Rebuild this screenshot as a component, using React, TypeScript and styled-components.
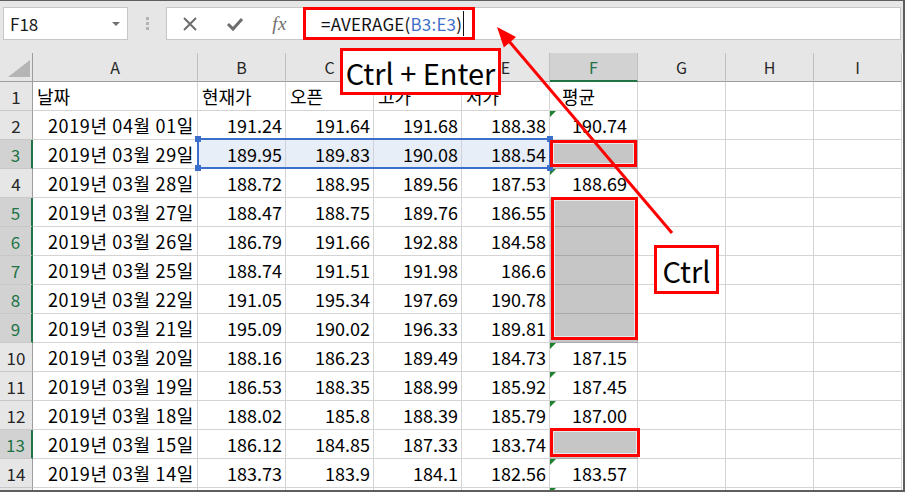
import React from 'react';
import styled, { createGlobalStyle } from 'styled-components';

const FONT = `"Noto Sans CJK KR", "Noto Sans", sans-serif`;

const GlobalStyle = createGlobalStyle`
  html, body { margin: 0; padding: 0; background: #ffffff; }
  body { font-family: ${FONT}; }
`;

const Page = styled.div`
  width: 905px;
  height: 492px;
  box-sizing: border-box;
  padding: 1px 2px 2px 0;
  background: #5e5e5e;
`;

const Frame = styled.div`
  position: relative;
  width: 903px;
  height: 489px;
  overflow: hidden;
  background: #e6e6e6;
  font-family: ${FONT};
`;

const TopBar = styled.div`
  height: 52px;
  box-sizing: border-box;
  display: flex;
  align-items: flex-start;
  padding: 6px 2px 0 3px;
`;

const NameBox = styled.div`
  width: 125px;
  height: 33px;
  box-sizing: border-box;
  background: #ffffff;
  border: 1px solid #c6c6c6;
  display: flex;
  align-items: center;
  justify-content: space-between;
  padding: 0 7px 0 6px;
  font-size: 17px;
  color: #1a1a1a;
`;

const DropArrow = styled.span`
  width: 0;
  height: 0;
  border-left: 4px solid transparent;
  border-right: 4px solid transparent;
  border-top: 4px solid #707070;
`;

const Grip = styled.div`
  display: flex;
  flex-direction: column;
  gap: 2px;
  margin: 10px 17px 0 18px;
`;

const GripDot = styled.span`
  width: 3px;
  height: 3px;
  background: #b3b3b3;
`;

const FormulaBox = styled.div`
  flex: 1;
  height: 33px;
  box-sizing: border-box;
  background: #ffffff;
  border: 1px solid #c6c6c6;
  display: flex;
  align-items: center;
`;

const ToolSlot = styled.span`
  width: 45px;
  height: 100%;
  display: flex;
  align-items: center;
  justify-content: center;
  color: #6e6e6e;
`;

const FxText = styled.span`
  font-family: "Liberation Serif", "DejaVu Serif", serif;
  font-style: italic;
  font-size: 19px;
  color: #6e6e6e;
  letter-spacing: 0.5px;
`;

const FormulaText = styled.div`
  margin-left: 19px;
  font-size: 17px;
  color: #111111;
  display: flex;
  align-items: center;
  white-space: pre;
  letter-spacing: 0.2px;
`;

const Ref = styled.span`
  color: #3f6fc9;
`;

const Caret = styled.span`
  width: 1px;
  height: 25px;
  background: #111111;
  margin-left: 1px;
`;

const Sheet = styled.div`
  position: relative;
  display: grid;
  grid-template-columns: 33px 165px repeat(8, 88px);
  grid-auto-rows: 29px;
  background: #ffffff;
`;

const Corner = styled.div`
  box-sizing: border-box;
  background: #e6e6e6;
  border-right: 1px solid #9e9e9e;
  border-bottom: 1px solid #9e9e9e;
  display: flex;
  align-items: flex-end;
  justify-content: flex-end;
  padding: 0 2px 4px 0;
  &::after {
    content: '';
    width: 0;
    height: 0;
    border-left: 22px solid transparent;
    border-bottom: 17px solid #b5b5b5;
  }
`;

const ColHead = styled.div<{ $active?: boolean }>`
  box-sizing: border-box;
  display: flex;
  align-items: center;
  justify-content: center;
  background: ${(p) => (p.$active ? '#d2d2d2' : '#e6e6e6')};
  color: ${(p) => (p.$active ? '#217346' : '#262626')};
  border-right: 1px solid #c0c0c0;
  border-bottom: ${(p) => (p.$active ? '2px solid #217346' : '1px solid #9e9e9e')};
  font-size: 16px;
`;

const RowHead = styled.div<{ $active?: boolean }>`
  box-sizing: border-box;
  display: flex;
  align-items: center;
  justify-content: center;
  background: ${(p) => (p.$active ? '#d2d2d2' : '#e6e6e6')};
  color: ${(p) => (p.$active ? '#217346' : '#262626')};
  border-right: ${(p) => (p.$active ? '2px solid #217346' : '1px solid #9e9e9e')};
  border-bottom: 1px solid #c8c8c8;
  font-size: 17px;
`;

type Fill = 'none' | 'sel' | 'gray';

const Cell = styled.div<{
  $align: 'left' | 'right';
  $fill: Fill;
  $flag?: boolean;
  $padR?: number;
  $padL?: number;
  $spread?: boolean;
}>`
  position: relative;
  box-sizing: border-box;
  border-right: 1px solid ${(p) => (p.$fill === 'gray' ? '#a9a9a9' : p.$fill === 'sel' ? '#cdd2db' : '#d4d4d4')};
  border-bottom: 1px solid ${(p) => (p.$fill === 'gray' ? '#a9a9a9' : '#d4d4d4')};
  background: ${(p) => (p.$fill === 'gray' ? '#c6c6c6' : p.$fill === 'sel' ? '#e8eef8' : '#ffffff')};
  font-size: 18px;
  line-height: 28px;
  color: #000000;
  white-space: nowrap;
  overflow: hidden;
  text-align: ${(p) => p.$align};
  letter-spacing: ${(p) => (p.$spread ? '0.65px' : '0')};
  padding: 0 ${(p) => p.$padR ?? 3}px 0 ${(p) => p.$padL ?? 4}px;
  &::before {
    content: '';
    display: ${(p) => (p.$flag ? 'block' : 'none')};
    position: absolute;
    left: 0;
    top: 0;
    width: 0;
    height: 0;
    border-top: 6px solid #1e8130;
    border-right: 6px solid transparent;
  }
`;

const Selection = styled.div`
  position: absolute;
  left: 197px;
  top: 85px;
  width: 354px;
  height: 31px;
  box-sizing: border-box;
  border: 2px solid #3a6fcc;
  pointer-events: none;
`;

const Handle = styled.span<{ $right?: boolean; $bottom?: boolean }>`
  position: absolute;
  width: 6px;
  height: 6px;
  background: #3a6fcc;
  ${(p) => (p.$right ? 'right: -4px;' : 'left: -4px;')}
  ${(p) => (p.$bottom ? 'bottom: -4px;' : 'top: -4px;')}
`;

const RedBox = styled.div<{ $x: number; $y: number; $w: number; $h: number }>`
  position: absolute;
  left: ${(p) => p.$x}px;
  top: ${(p) => p.$y}px;
  width: ${(p) => p.$w}px;
  height: ${(p) => p.$h}px;
  box-sizing: border-box;
  border: 3px solid #ff0000;
  box-shadow: inset 0 0 0 1px rgba(255, 255, 255, 0.6);
  pointer-events: none;
`;

const Callout = styled.div<{ $x: number; $y: number; $w: number; $h: number }>`
  position: absolute;
  left: ${(p) => p.$x}px;
  top: ${(p) => p.$y}px;
  width: ${(p) => p.$w}px;
  height: ${(p) => p.$h}px;
  box-sizing: border-box;
  border: 3px solid #ff0000;
  background: #ffffff;
  display: flex;
  align-items: center;
  justify-content: center;
  font-size: 29px;
  color: #000000;
  white-space: pre;
`;

const ArrowLayer = styled.svg`
  position: absolute;
  left: 0;
  top: 0;
  pointer-events: none;
`;

const COLS = ['A', 'B', 'C', 'D', 'E', 'F', 'G', 'H', 'I'];

const HEAD = ['날짜', '현재가', '오픈', '고가', '저가', '평균'];

const DATA: (string | null)[][] = [
  ['2019년 04월 01일', '191.24', '191.64', '191.68', '188.38', '190.74'],
  ['2019년 03월 29일', '189.95', '189.83', '190.08', '188.54', null],
  ['2019년 03월 28일', '188.72', '188.95', '189.56', '187.53', '188.69'],
  ['2019년 03월 27일', '188.47', '188.75', '189.76', '186.55', null],
  ['2019년 03월 26일', '186.79', '191.66', '192.88', '184.58', null],
  ['2019년 03월 25일', '188.74', '191.51', '191.98', '186.6', null],
  ['2019년 03월 22일', '191.05', '195.34', '197.69', '190.78', null],
  ['2019년 03월 21일', '195.09', '190.02', '196.33', '189.81', null],
  ['2019년 03월 20일', '188.16', '186.23', '189.49', '184.73', '187.15'],
  ['2019년 03월 19일', '186.53', '188.35', '188.99', '185.92', '187.45'],
  ['2019년 03월 18일', '188.02', '185.8', '188.39', '185.79', '187.00'],
  ['2019년 03월 15일', '186.12', '184.85', '187.33', '183.74', null],
  ['2019년 03월 14일', '183.73', '183.9', '184.1', '182.56', '183.57'],
  [null, null, null, null, null, null],
];

const ACTIVE_ROWS = [3, 5, 6, 7, 8, 9, 13];
const FLAG_ROWS = [2, 4, 10, 11, 12, 14, 15];
const LAST_ROW = 15;

function Arrow() {
  const tail = { x: 672, y: 232 };
  const tip = { x: 497, y: 26 };
  const dx = tip.x - tail.x;
  const dy = tip.y - tail.y;
  const len = Math.hypot(dx, dy);
  const ux = dx / len;
  const uy = dy / len;
  const L = 20;
  const W = 8;
  const bx = tip.x - ux * L;
  const by = tip.y - uy * L;
  const px = -uy;
  const py = ux;
  const pts = `${tip.x},${tip.y} ${bx + px * W},${by + py * W} ${bx - px * W},${by - py * W}`;
  return (
    <ArrowLayer width={903} height={489} viewBox="0 0 903 489">
      <line x1={tail.x} y1={tail.y} x2={bx + ux * 2} y2={by + uy * 2} stroke="#ff0000" strokeWidth={3} />
      <polygon points={pts} fill="#ff0000" />
    </ArrowLayer>
  );
}

export default function App() {
  return (
    <>
      <GlobalStyle />
      <Page>
        <Frame>
          <TopBar>
            <NameBox>
              <span>F18</span>
              <DropArrow />
            </NameBox>
            <Grip>
              <GripDot />
              <GripDot />
              <GripDot />
            </Grip>
            <FormulaBox>
              <ToolSlot>
                <svg width="16" height="16" viewBox="0 0 16 16">
                  <path d="M2 2 L14 14 M14 2 L2 14" stroke="#6e6e6e" strokeWidth="2" fill="none" />
                </svg>
              </ToolSlot>
              <ToolSlot>
                <svg width="18" height="16" viewBox="0 0 18 16">
                  <path d="M2 8 L7 13 L16 3" stroke="#6e6e6e" strokeWidth="3" fill="none" />
                </svg>
              </ToolSlot>
              <ToolSlot>
                <FxText>fx</FxText>
              </ToolSlot>
              <FormulaText>
                =AVERAGE(<Ref>B3:E3</Ref>)<Caret />
              </FormulaText>
            </FormulaBox>
          </TopBar>

          <Sheet>
            <Corner />
            {COLS.map((c) => (
              <ColHead key={c} $active={c === 'F'}>
                {c}
              </ColHead>
            ))}

            <RowHead>1</RowHead>
            {COLS.map((c, i) => (
              <Cell key={c} $align="left" $fill="none" $padL={i === 5 ? 12 : 4}>
                {HEAD[i] ?? ''}
              </Cell>
            ))}

            {DATA.map((row, ri) => {
              const r = ri + 2;
              return (
                <React.Fragment key={r}>
                  <RowHead $active={ACTIVE_ROWS.includes(r)}>{r === LAST_ROW ? '' : r}</RowHead>
                  {COLS.map((c, ci) => {
                    const isF = ci === 5;
                    let fill: Fill = 'none';
                    if (isF && ACTIVE_ROWS.includes(r)) fill = 'gray';
                    if (r === 3 && ci >= 1 && ci <= 4) fill = 'sel';
                    return (
                      <Cell
                        key={c}
                        $align="right"
                        $fill={fill}
                        $flag={isF && FLAG_ROWS.includes(r)}
                        $padR={isF ? 10 : 3}
                        $spread={ci === 0}
                      >
                        {row[ci] ?? ''}
                      </Cell>
                    );
                  })}
                </React.Fragment>
              );
            })}

            <Selection>
              <Handle />
              <Handle $right />
              <Handle $bottom />
              <Handle $right $bottom />
            </Selection>
          </Sheet>

          <RedBox $x={303} $y={6} $w={172} $h={33} />
          <RedBox $x={550} $y={139} $w={87} $h={27} />
          <RedBox $x={551} $y={196} $w={87} $h={143} />
          <RedBox $x={550} $y={427} $w={90} $h={29} />
          <Arrow />
          <Callout $x={340} $y={47} $w={161} $h={47}>Ctrl + Enter</Callout>
          <Callout $x={654} $y={244} $w={65} $h={49}>Ctrl</Callout>
        </Frame>
      </Page>
    </>
  );
}
